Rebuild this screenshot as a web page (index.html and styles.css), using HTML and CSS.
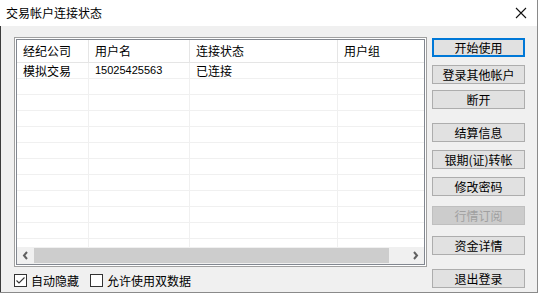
FILE: index.html
```html
<!DOCTYPE html>
<html lang="zh-CN">
<head>
    <meta charset="UTF-8">
    <title>交易帐户连接状态</title>
    <link rel="stylesheet" href="styles.css">
</head>
<body>
    <div class="window">
        <div class="titlebar">
            <span class="title">交易帐户连接状态</span>
            <svg class="close" width="12" height="12" viewBox="0 0 12 12">
                <path d="M1 1L11 11M11 1L1 11" stroke="#111" stroke-width="1.1" fill="none"/>
            </svg>
        </div>
        <div class="content">
            <div class="left">
                <div class="list">
                    <div class="list-inner">
                        <div class="row head">
                            <div class="cell c1">经纪公司</div>
                            <div class="cell c2">用户名</div>
                            <div class="cell c3">连接状态</div>
                            <div class="cell c4">用户组</div>
                        </div>
                        <div class="rows">
                            <div class="row">
                                <div class="cell c1">模拟交易</div>
                                <div class="cell c2 num">15025425563</div>
                                <div class="cell c3">已连接</div>
                                <div class="cell c4"></div>
                            </div>
                            <div class="row"><div class="cell c1"></div><div class="cell c2"></div><div class="cell c3"></div><div class="cell c4"></div></div>
                            <div class="row"><div class="cell c1"></div><div class="cell c2"></div><div class="cell c3"></div><div class="cell c4"></div></div>
                            <div class="row"><div class="cell c1"></div><div class="cell c2"></div><div class="cell c3"></div><div class="cell c4"></div></div>
                            <div class="row"><div class="cell c1"></div><div class="cell c2"></div><div class="cell c3"></div><div class="cell c4"></div></div>
                            <div class="row"><div class="cell c1"></div><div class="cell c2"></div><div class="cell c3"></div><div class="cell c4"></div></div>
                            <div class="row"><div class="cell c1"></div><div class="cell c2"></div><div class="cell c3"></div><div class="cell c4"></div></div>
                            <div class="row"><div class="cell c1"></div><div class="cell c2"></div><div class="cell c3"></div><div class="cell c4"></div></div>
                            <div class="row"><div class="cell c1"></div><div class="cell c2"></div><div class="cell c3"></div><div class="cell c4"></div></div>
                            <div class="row"><div class="cell c1"></div><div class="cell c2"></div><div class="cell c3"></div><div class="cell c4"></div></div>
                            <div class="row"><div class="cell c1"></div><div class="cell c2"></div><div class="cell c3"></div><div class="cell c4"></div></div>
                            <div class="row"><div class="cell c1"></div><div class="cell c2"></div><div class="cell c3"></div><div class="cell c4"></div></div>
                        </div>
                        <div class="hscroll">
                            <svg class="arrow" width="17" height="17" viewBox="0 0 17 17">
                                <path d="M10 5L7 8.5L10 12" stroke="#606060" stroke-width="2" fill="none"/>
                            </svg>
                            <div class="track"><div class="thumb"></div></div>
                            <svg class="arrow" width="17" height="17" viewBox="0 0 17 17">
                                <path d="M7 5L10 8.5L7 12" stroke="#606060" stroke-width="2" fill="none"/>
                            </svg>
                        </div>
                    </div>
                </div>
                <div class="options">
                    <label class="check">
                        <span class="box">
                            <svg width="11" height="11" viewBox="0 0 11 11">
                                <path d="M1.5 5.5L4 8L9.5 2.5" stroke="#333" stroke-width="1.1" fill="none"/>
                            </svg>
                        </span>
                        自动隐藏
                    </label>
                    <label class="check">
                        <span class="box"></span>
                        允许使用双数据
                    </label>
                </div>
            </div>
            <div class="buttons">
                <button class="btn default">开始使用</button>
                <button class="btn">登录其他帐户</button>
                <button class="btn">断开</button>
                <button class="btn">结算信息</button>
                <button class="btn">银期(证)转帐</button>
                <button class="btn">修改密码</button>
                <button class="btn" disabled>行情订阅</button>
                <button class="btn">资金详情</button>
                <button class="btn">退出登录</button>
            </div>
        </div>
    </div>
</body>
</html>
```

FILE: styles.css
```css
body {
    margin: 0;
    padding: 0;
    background-color: #ffffff;
    font-family: "Noto Sans CJK SC", "Noto Sans", sans-serif;
    font-size: 12px;
    color: #000;
}
.window {
    width: 538px;
    height: 293px;
    box-sizing: border-box;
    border-right: 1px solid #8a8a8a;
    border-bottom: 1px solid #8a8a8a;
    background: #f0f0f0;
}
.titlebar {
    height: 26px;
    background: #ffffff;
    display: flex;
    align-items: center;
    justify-content: space-between;
    padding: 0 10px 0 6px;
}
.title {
    font-size: 12px;
    line-height: 26px;
}
.close {
    display: block;
}
.content {
    display: flex;
    height: 266px;
    border-left: 1px solid #3c3c3c;
}
.left {
    padding: 11px 0 0 13px;
}
.list {
    width: 413px;
    height: 230px;
    box-sizing: border-box;
    border: 1px solid #a0a0a0;
    padding: 1px;
    background: #ffffff;
}
.list-inner {
    height: 100%;
    box-sizing: border-box;
    border: 1px solid #828790;
    display: flex;
    flex-direction: column;
}
.row {
    display: flex;
    height: 16px;
    box-sizing: border-box;
    border-bottom: 1px solid #f0f0f0;
}
.row.head {
    height: 23px;
    border-bottom: 1px solid #e5e5e5;
}
.rows {
    height: 184px;
    overflow: hidden;
}
.cell {
    box-sizing: border-box;
    padding-left: 6px;
    border-right: 1px solid #f0f0f0;
    line-height: 15px;
    white-space: nowrap;
}
.head .cell {
    border-right: 1px solid #e5e5e5;
    line-height: 22px;
}
.c1 { width: 72px; }
.c2 { width: 101px; }
.c3 { width: 148px; }
.c4 { flex: 1; border-right: none; }
.head .c4 { border-right: none; }
.num {
    font-family: "Liberation Sans", sans-serif;
    font-size: 11px;
}
.hscroll {
    display: flex;
    height: 17px;
    background: #f0f0f0;
}
.arrow {
    display: block;
    flex: none;
}
.track {
    flex: 1;
    padding: 1px 0;
}
.thumb {
    width: 355px;
    height: 15px;
    background: #cdcdcd;
}
.options {
    display: flex;
    gap: 11px;
    margin-top: 7px;
}
.check {
    display: flex;
    align-items: center;
    gap: 4px;
    line-height: 13px;
}
.box {
    width: 13px;
    height: 13px;
    box-sizing: border-box;
    border: 1px solid #333;
    background: #fff;
    display: flex;
    align-items: center;
    justify-content: center;
}
.box svg {
    display: block;
}
.buttons {
    display: flex;
    flex-direction: column;
    margin-left: 5px;
    padding-top: 12px;
}
.btn {
    width: 93px;
    height: 19px;
    box-sizing: border-box;
    padding: 0;
    background: #e1e1e1;
    border: 1px solid #adadad;
    font-family: "Noto Sans CJK SC", sans-serif;
    font-size: 12px;
    line-height: 16px;
    color: #000;
}
.btn.default {
    border: 2px solid #0078d7;
}
.btn:disabled {
    background: #cccccc;
    border-color: #bfbfbf;
    color: #a0a0a0;
}
.btn:nth-child(2) { margin-top: 8px; }
.btn:nth-child(3) { margin-top: 6px; }
.btn:nth-child(4) { margin-top: 14px; }
.btn:nth-child(5) { margin-top: 8px; }
.btn:nth-child(6) { margin-top: 8px; }
.btn:nth-child(7) { margin-top: 10px; }
.btn:nth-child(8) { margin-top: 11px; }
.btn:nth-child(9) { margin-top: 14px; }
```
